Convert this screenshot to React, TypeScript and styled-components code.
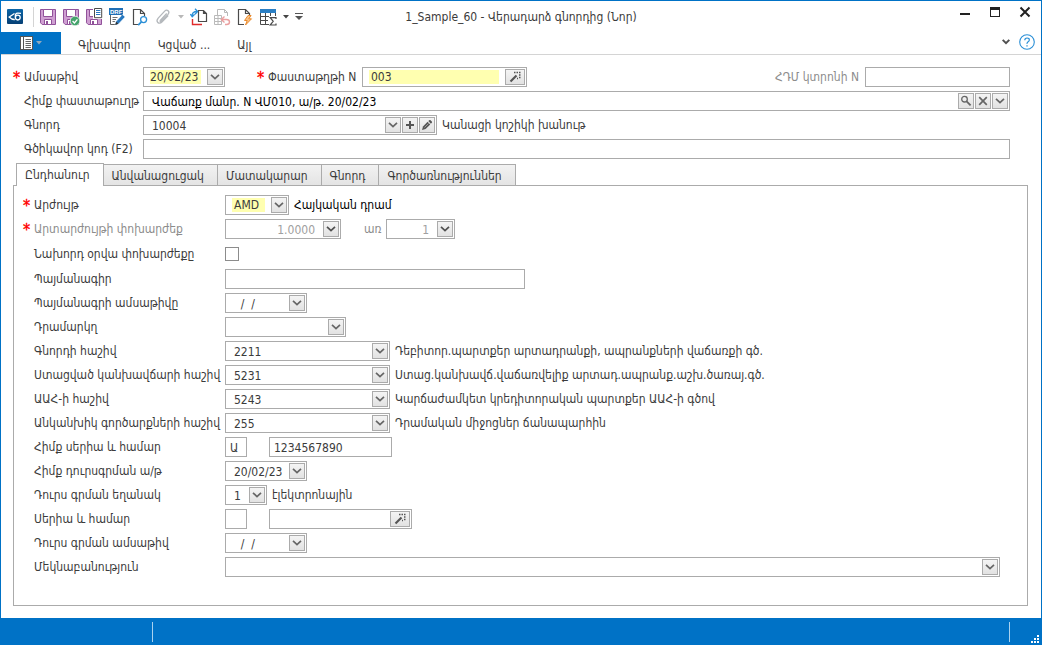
import React from "react";
import styled, { createGlobalStyle, css } from "styled-components";

const BLUE = "#0072c6";
const LINE = "#ababab";
const INK = "#3b3b3b";
const MUTED = "#8c8c8c";
const YELLOW = "#ffffb0";

const GlobalStyle = createGlobalStyle`
  *, *::before, *::after { box-sizing: border-box; }
  body { margin: 0; background: #fff; }
  body, button, input, select {
    font-family: "DejaVu Sans Condensed", "DejaVu Sans", sans-serif;
    font-size: 12px;
    color: ${INK};
  }
  button, input, select { margin: 0; padding: 0; border: 0; background: none; border-radius: 0; outline: 0; }
  svg { display: block; flex: none; }
`;

const Window = styled.div`
  display: flex;
  flex-direction: column;
  min-height: 100vh;
  border: 1px solid ${BLUE};
  border-bottom: 0;
`;

const TitleBar = styled.header`
  display: grid;
  grid-template-columns: 1fr auto 1fr;
  align-items: center;
  height: 31px;
  padding: 0 5px;
`;

const Title = styled.h1`
  margin: 0;
  font-size: 12px;
  font-weight: 400;
  line-height: 18px;
  white-space: nowrap;
`;

const Tools = styled.div`
  display: flex;
  align-items: center;
  gap: 5px;
  min-width: 0;
`;

const ToolButton = styled.button<{ $narrow?: boolean }>`
  display: flex;
  align-items: center;
  justify-content: center;
  flex: none;
  width: ${(p) => (p.$narrow ? 8 : 18)}px;
  height: 18px;
`;

const ToolDivider = styled.span`
  width: 1px;
  height: 20px;
  margin: 0 0 0 4px;
  background: #d4d4d4;
`;

const WindowButtons = styled.div`
  display: flex;
  justify-content: flex-end;
  align-self: start;
  gap: 18px;
  padding: 5px 5px 0 0;
`;

const WindowButton = styled.button`
  width: 12px;
  height: 12px;
`;

const Ribbon = styled.nav`
  display: flex;
  height: 23px;
  padding-right: 5px;
  border-bottom: 1px solid #d4d4d4;
`;

const FileButton = styled.button`
  display: flex;
  align-items: center;
  justify-content: center;
  gap: 3px;
  width: 60px;
  height: 22px;
  margin-right: 4px;
  background: ${BLUE};
`;

const RibbonTab = styled.button`
  height: 24px;
  padding: 2px 14px 0 13px;
  white-space: nowrap;
`;

const RibbonEnd = styled.div`
  display: flex;
  align-items: center;
  gap: 8px;
  height: 19px;
  margin-left: auto;
`;

const Content = styled.main`
  display: flex;
  flex-direction: column;
  flex: 1;
  padding: 12px 13px 12px 12px;
`;

const Stack = styled.div`
  display: flex;
  flex-direction: column;
  gap: 4px;
`;

const HeaderFields = styled(Stack)`
  padding-right: 18px;
  margin-bottom: 4px;
`;

const Row = styled.div<{ $tall?: boolean }>`
  display: flex;
  align-items: center;
  height: ${(p) => (p.$tall ? 22 : 20)}px;
`;

const Caption = styled.label<{ $width?: number; $muted?: boolean; $gap?: number; $inset?: number }>`
  display: flex;
  flex: none;
  width: ${(p) => (p.$width ? `${p.$width}px` : "auto")};
  margin-left: ${(p) => p.$gap ?? 0}px;
  padding-left: ${(p) => p.$inset ?? 0}px;
  line-height: 20px;
  height: 20px;
  white-space: nowrap;
  color: ${(p) => (p.$muted ? MUTED : INK)};
`;

const Star = styled.span`
  flex: none;
  width: 11px;
  font-size: 16px;
  line-height: 22px;
  color: #f00;
  -webkit-text-stroke: 0.4px #f00;
`;

const Note = styled.output<{ $strong?: boolean }>`
  padding-left: 5px;
  line-height: 20px;
  white-space: nowrap;
  color: ${(p) => (p.$strong ? "#000" : INK)};
`;

const Spacer = styled.span`
  flex: 1;
`;

const Gap = styled.span<{ $wide?: boolean }>`
  flex: none;
  width: ${(p) => (p.$wide ? 22 : 6)}px;
`;

const Box = styled.div<{ $width?: number }>`
  display: flex;
  align-items: center;
  gap: 1px;
  flex: ${(p) => (p.$width ? "none" : "1")};
  width: ${(p) => (p.$width ? `${p.$width}px` : "auto")};
  min-width: 0;
  height: 20px;
  padding: 1px;
  border: 1px solid ${LINE};
  background: #fff;
`;

const required = css`
  background-color: ${YELLOW};
  background-clip: content-box;
  padding: 1px 5px;
  text-indent: 2px;
`;

const Entry = styled.input<{
  $required?: boolean;
  $near?: boolean;
  $strong?: boolean;
  $right?: boolean;
  $date?: boolean;
}>`
  flex: 1;
  min-width: 0;
  width: 100%;
  height: 16px;
  padding: 1px ${(p) => (p.$date ? 2 : 7)}px 0 ${(p) => (p.$near ? 3 : 7)}px;
  text-align: ${(p) => (p.$right ? "right" : "left")};
  ${(p) => p.$strong && "color: #000;"}
  ${(p) => p.$required && required}
  ${(p) => p.$required && p.$date && "text-indent: 0;"}
  &:disabled { color: #a0a0a0; }
`;

const ComboBox = styled(Box)`
  display: grid;
  grid-template-columns: 1fr 16px;
  gap: 0;
`;

const Choice = styled.select<{ $required?: boolean }>`
  grid-area: 1 / 1 / 2 / 3;
  appearance: none;
  min-width: 0;
  height: 16px;
  padding: 1px 17px 0 7px;
  ${(p) => p.$required && required}
  ${(p) => p.$required && "padding-right: 22px;"}
`;

const bevel = css`
  display: flex;
  align-items: center;
  justify-content: center;
  flex: none;
  height: 16px;
  border: 1px solid ${LINE};
  background: linear-gradient(#f4f4f4, #e2e2e2);
`;

const MiniButton = styled.button<{ $wide?: boolean }>`
  ${bevel}
  width: ${(p) => (p.$wide ? 20 : 16)}px;
`;

const ComboArrow = styled.span`
  ${bevel}
  grid-area: 1 / 2;
  pointer-events: none;
`;

const Tick = styled.input`
  appearance: none;
  width: 14px;
  height: 14px;
  margin: 0;
  border: 1px solid #8c8c8c;
  background: #fff;
`;

const TabList = styled.div`
  display: flex;
  align-items: flex-end;
  height: 22px;
  padding-left: 3px;
`;

const Tab = styled.button<{ $active?: boolean }>`
  height: 21px;
  padding: 1px 13px 0 8px;
  border: 1px solid ${LINE};
  border-left-width: 0;
  border-bottom: 0;
  background: linear-gradient(#f2f2f2, #e4e4e4);
  white-space: nowrap;
  ${(p) =>
    p.$active &&
    css`
      height: 23px;
      margin-bottom: -1px;
      padding-bottom: 1px;
      border-left-width: 1px;
      background: #fff;
      z-index: 1;
    `}
`;

const Panel = styled(Stack)`
  flex: 1;
  padding: 9px 27px 28px 9px;
  border: 1px solid ${LINE};
`;

const StatusBar = styled.footer`
  display: flex;
  align-items: center;
  height: 27px;
  padding: 0 2px 0 0;
  background: ${BLUE};
`;

const StatusCell = styled.div<{ $width?: number }>`
  flex: ${(p) => (p.$width ? "none" : "1")};
  width: ${(p) => (p.$width ? `${p.$width}px` : "auto")};
  height: 20px;
  border-right: 1px solid #a9d2ef;
`;

const Grip = styled.span`
  display: flex;
  align-self: flex-end;
  justify-content: flex-end;
  width: 29px;
  padding-bottom: 2px;
`;

/* ---------- small glyphs inside fields ---------- */

const Chevron = ({ color = "#666" }: { color?: string }) => (
  <svg width="10" height="6" viewBox="0 0 10 6" fill="none" stroke={color} strokeWidth="1.7">
    <path d="M1 .8 5 4.6 9 .8" />
  </svg>
);

const CollapseChevron = () => (
  <svg width="8" height="6" viewBox="0 0 8 6" fill="none" stroke="#505050" strokeWidth="2">
    <path d="M.7 .9 4 4.200 7.300 .9" />
  </svg>
);

const Caret = ({ color }: { color: string }) => (
  <svg width="6" height="4" viewBox="0 0 6 4">
    <path d="M0 0h6L3 3.5z" fill={color} />
  </svg>
);

const Plus = () => (
  <svg width="10" height="10" viewBox="0 0 10 10">
    <path d="M5 1v8M1 5h8" stroke="#555" strokeWidth="2" />
  </svg>
);

const Pencil = () => (
  <svg width="12" height="12" viewBox="0 0 12 12">
    <path d="M1 11 2 7.4 6.6 2.8 9.2 5.4 4.6 10z" fill="#555" />
    <path d="M7.3 2.1 8.2 1.2q.7-.6 1.4 0l1.2 1.2q.6.7 0 1.4l-.9.9z" fill="#555" />
    <path d="M3.500 8.500 7.500 4.500" stroke="#bbb" strokeWidth=".7" />
  </svg>
);

const Wand = () => (
  <svg width="12" height="12" viewBox="0 0 12 12">
    <path d="M1.5 10.5 7.5 4.5" stroke="#555" strokeWidth="2.2" />
    <path d="M5 1.500h1.500M7.500 1.500h1.500M10 1.500h1.500M10 4h1.500M10 6.500h1.500M8 7.500h1" stroke="#555" strokeWidth="1.4" />
  </svg>
);

const Lens = () => (
  <svg width="12" height="12" viewBox="0 0 12 12" fill="none" stroke="#666">
    <circle cx="4.5" cy="4.2" r="2.8" strokeWidth="1.3" />
    <path d="M6.6 6.4 10.6 10.4" strokeWidth="1.9" />
  </svg>
);

const Cross = () => (
  <svg width="10" height="10" viewBox="0 0 10 10">
    <path d="M1.2 1.2 8.8 8.8M8.8 1.2 1.2 8.8" stroke="#666" strokeWidth="1.7" />
  </svg>
);

/* ---------- toolbar icons ---------- */

const Icon = ({ children }: { children: React.ReactNode }) => (
  <svg width="18" height="18" viewBox="0 0 18 18" fill="none">
    {children}
  </svg>
);

const LogoIcon = () => (
  <Icon>
    <defs>
      <linearGradient id="logo-fill" x1="0" y1="0" x2="0" y2="1">
        <stop offset="0" stopColor="#0b66a8" />
        <stop offset="1" stopColor="#063f74" />
      </linearGradient>
    </defs>
    <rect x="1" y="1" width="16" height="15" rx="1" fill="url(#logo-fill)" />
    <path d="M8.5 5.5 3.2 9q2.8 2.8 5.6 2.5" stroke="#fff" strokeWidth="1.4" />
    <circle cx="11.8" cy="9.6" r="2.4" stroke="#fff" strokeWidth="1.3" />
    <path d="M9.4 9.4Q8.8 5 12 5.2l3 .2" stroke="#fff" strokeWidth="1.3" />
  </Icon>
);

const Floppy = () => (
  <>
    <path d="M1.5 1.5h15v15H3.2L1.5 14.8z" fill="#cf9fd2" stroke="#91529a" />
    <path d="M4.5 1.500h9v7h-9z" fill="#fff" stroke="#91529a" />
    <path d="M5.5 11.5h7v5h-7z" fill="#fff" stroke="#91529a" />
    <path d="M7 13h2v3.5H7z" fill="#91529a" />
  </>
);

const SaveIcon = () => (
  <Icon>
    <Floppy />
  </Icon>
);

const SaveCheckIcon = () => (
  <Icon>
    <Floppy />
    <circle cx="13" cy="13" r="4.8" fill="#45a36c" stroke="#fff" strokeWidth=".7" />
    <path d="m10.6 13 1.8 1.9 3-3.6" stroke="#fff" strokeWidth="1.3" />
  </Icon>
);

const SaveDocIcon = () => (
  <Icon>
    <Floppy />
    <path d="M8 0h10v11H8z" fill="#fff" />
    <path d="M9.5.5h7.2v9.2H9.5z" fill="#fff" stroke="#4a4a4a" />
    <path d="M11 2.500h4.4M11 4.500h4.400M11 6.500h4.400" stroke="#2878c0" />
  </Icon>
);

const DraftIcon = () => (
  <Icon>
    <path d="M2.500 6v10.500H9M13.500 7v2" stroke="#606060" />
    <path d="M4.500 9.500h5M4.500 11.500h3.500M4.500 13.500h2.400" stroke="#707070" />
    <rect x="1" y="0" width="14" height="7" fill="#1f6fb5" />
    <text x="2" y="6" fontSize="6" fontWeight="700" fill="#fff" fontFamily="Liberation Sans, sans-serif">
      DRF
    </text>
    <path d="m8 13.500 6.500-7 2.600 2.400-6.600 7-3.500 1.200z" fill="#2878c0" stroke="#fff" strokeWidth=".5" />
    <path d="m7.2 16.9 1-3.2 2.2 2z" fill="#333" />
  </Icon>
);

const Sheet = ({ color = "#4a4a4a" }: { color?: string }) => (
  <path d="M8 16.5H2.5v-15h7l4 4V8M9.5 1.5v4h4" stroke={color} strokeWidth="1.2" />
);

const PreviewIcon = () => (
  <Icon>
    <Sheet />
    <circle cx="12.6" cy="11.6" r="3" stroke="#2b8fd6" strokeWidth="1.3" />
    <path d="m10.4 13.8-3.2 3.4" stroke="#2b8fd6" strokeWidth="1.7" />
  </Icon>
);

const ClipIcon = () => (
  <Icon>
    <path
      d="m12.700 5.500-6.200 6.700c-.9 1.100-.1 2 .9 1.100l6.600-6.900c2.300-2.700-.9-5.700-3.300-3.300l-6.500 7c-2.900 3.400.6 7 3.700 3.900l6.300-6.500"
      stroke="#b4b8bc"
      strokeWidth="1.300"
    />
  </Icon>
);

const RefreshDocsIcon = () => (
  <Icon>
    <path d="M8.500 13.500v-11h5l3 3v8zM13.500 2.500v3h3" fill="#fff" stroke="#4a4a4a" strokeWidth="1.200" />
    <path d="M2.500 11v5.500h9.500" stroke="#e02b2b" strokeWidth="1.400" />
    <path d="M2.200 8.500q-.6-5 5-5M5 .8l2.600 2.700L5 6.200M.3 6l1.900 2.700L4.600 6.200" stroke="#2b8fd6" strokeWidth="1.300" />
  </Icon>
);

const UndoDocIcon = () => (
  <Icon>
    <path
      d="M4.500 7V1.500h7l3 3V8M11.500 1.500v3h3M1.500 7.500h7v3h-7zM1.500 10.500h7v3h-7zM1.500 13.500h7v3h-7zM5 7.500v9"
      stroke="#b9b9b9"
    />
    <path d="M8.500 11.500h5q3 0 3 2.500t-3 2.500H12M11.500 8.500l-3.200 3 3.200 3" stroke="#eaa0a0" strokeWidth="1.400" />
  </Icon>
);

const RunDocIcon = () => (
  <Icon>
    <Sheet />
    <path d="m12 7.500-3.500 5h2.700l-1.700 4.500 6-6.200h-2.800l2.400-3.300z" fill="#f9c48b" stroke="#ea8a2c" />
  </Icon>
);

const TotalsIcon = () => (
  <Icon>
    <path d="M1 1h16v4H1z" fill="#2b7fc4" />
    <path d="M1.500 5v11.500H10M6.500 5v11.500M11.500 5v3M16.500 5v3M1.500 8.500h8.500M1.500 12.500H9" stroke="#4a4a4a" />
    <path d="M17 11V9.600h-5.800l3 3.700-3 3.700H17v-1.400" stroke="#4a4a4a" strokeWidth="1.200" />
  </Icon>
);

const OverflowIcon = () => (
  <svg width="8" height="7" viewBox="0 0 8 7">
    <path d="M0 0h8v1H0zM0 3h8L4 7z" fill="#555" />
  </svg>
);

const DocListIcon = () => (
  <svg width="13" height="14" viewBox="0 0 13 14" fill="none">
    <rect x=".5" y=".5" width="12" height="13" fill="#fff" stroke="#555" />
    <path d="M3.500 1v12" stroke="#555" />
    <path d="M5.500 3.500H11M5.500 5.500H11M5.500 7.500H11M5.500 9.500H11M5.500 11.500H11" stroke="#666" />
  </svg>
);

const HelpIcon = () => (
  <svg width="16" height="16" viewBox="0 0 16 16" fill="none" stroke="#2b8fd6">
    <circle cx="8" cy="8" r="7.300" strokeWidth="1.100" />
    <path d="M5.800 6.200q0-2.200 2.300-2.200t2.200 2q0 1-1.200 1.800T8 9.900" strokeWidth="1.200" />
    <path d="M8 11.200v1.400" strokeWidth="1.300" />
  </svg>
);

const ResizeGrip = () => (
  <svg width="8" height="8" viewBox="0 0 8 8" fill="#fff">
    <path d="M6 0h2v2H6zM3 3h2v2H3zM6 3h2v2H6zM0 6h2v2H0zM3 6h2v2H3zM6 6h2v2H6z" />
  </svg>
);

/* ---------- field helpers ---------- */

type ComboProps = { id: string; value: string; width?: number; required?: boolean };

const Combo = ({ id, value, width, required: isRequired }: ComboProps) => (
  <ComboBox $width={width}>
    <Choice id={id} $required={isRequired} defaultValue={value}>
      <option>{value}</option>
    </Choice>
    <ComboArrow>
      <Chevron />
    </ComboArrow>
  </ComboBox>
);

const DateField = ({ id, value, required: isRequired }: ComboProps) => (
  <Box $width={82}>
    <Entry id={id} $date $required={isRequired} defaultValue={value} />
    <MiniButton aria-label="Օրացույց">
      <Chevron />
    </MiniButton>
  </Box>
);

const RateField = ({ id, value, width }: ComboProps) => (
  <Box $width={width}>
    <Entry id={id} $right disabled defaultValue={value} />
    <MiniButton aria-label="Հաշվիչ">
      <Chevron color="#505050" />
    </MiniButton>
  </Box>
);

type LabelProps = { htmlFor: string; text: string; width: number; star?: boolean; muted?: boolean };

const FieldLabel = ({ htmlFor, text, width, star, muted }: LabelProps) => (
  <Caption htmlFor={htmlFor} $width={width} $muted={muted} $inset={star ? 0 : 11}>
    {star && <Star>*</Star>}
    {text}
  </Caption>
);

const HEAD = 130;
const BODY = 202;

const accounts = [
  { id: "acc-customer", label: "Գնորդի հաշիվ", value: "2211", note: "Դեբիտոր.պարտքեր արտադրանքի, ապրանքների վաճառքի գծ." },
  { id: "acc-advance", label: "Ստացված կանխավճարի հաշիվ", value: "5231", note: "Ստաց.կանխավճ.վաճառվելիք արտադ.ապրանք.աշխ.ծառայ.գծ." },
  { id: "acc-vat", label: "ԱԱՀ-ի հաշիվ", value: "5243", note: "Կարճաժամկետ կրեդիտորական պարտքեր ԱԱՀ-ի գծով" },
  { id: "acc-cashless", label: "Անկանխիկ գործարքների հաշիվ", value: "255", note: "Դրամական միջոցներ ճանապարհին" },
];

const tabs = ["Ընդհանուր", "Անվանացուցակ", "Մատակարար", "Գնորդ", "Գործառնություններ"];

export default function App() {
  return (
    <Window>
      <GlobalStyle />
      <TitleBar>
        <Tools>
          <LogoIcon />
          <ToolDivider />
          <ToolButton aria-label="Save"><SaveIcon /></ToolButton>
          <ToolButton aria-label="Save and close"><SaveCheckIcon /></ToolButton>
          <ToolButton aria-label="Save and print"><SaveDocIcon /></ToolButton>
          <ToolButton aria-label="Save draft"><DraftIcon /></ToolButton>
          <ToolButton aria-label="Preview"><PreviewIcon /></ToolButton>
          <ToolButton aria-label="Attach"><ClipIcon /></ToolButton>
          <ToolButton $narrow aria-label="Attach options"><Caret color="#b8b8b8" /></ToolButton>
          <ToolButton aria-label="Refresh"><RefreshDocsIcon /></ToolButton>
          <ToolButton aria-label="Undo"><UndoDocIcon /></ToolButton>
          <ToolButton aria-label="Run"><RunDocIcon /></ToolButton>
          <ToolButton aria-label="Totals"><TotalsIcon /></ToolButton>
          <ToolButton $narrow aria-label="Totals options"><Caret color="#444" /></ToolButton>
          <ToolButton $narrow aria-label="Customize"><OverflowIcon /></ToolButton>
        </Tools>
        <Title>1_Sample_60 - Վերադարձ գնորդից (Նոր)</Title>
        <WindowButtons>
          <WindowButton aria-label="Minimize">
            <svg width="12" height="12" viewBox="0 0 12 12"><path d="M1 7h10v2H1z" fill="#222" /></svg>
          </WindowButton>
          <WindowButton aria-label="Maximize">
            <svg width="12" height="12" viewBox="0 0 12 12"><path d="M1 1h10v10H1zM2 4v6h8V4z" fillRule="evenodd" fill="#222" /></svg>
          </WindowButton>
          <WindowButton aria-label="Close">
            <svg width="12" height="12" viewBox="0 0 12 12"><path d="M1.500 1.500l9 9M10.500 1.500l-9 9" stroke="#222" strokeWidth="2" /></svg>
          </WindowButton>
        </WindowButtons>
      </TitleBar>

      <Ribbon>
        <FileButton aria-label="File">
          <DocListIcon />
          <Caret color="#8fa9bd" />
        </FileButton>
        <RibbonTab>Գլխավոր</RibbonTab>
        <RibbonTab>Կցված ...</RibbonTab>
        <RibbonTab>Այլ</RibbonTab>
        <RibbonEnd>
          <ToolButton $narrow aria-label="Collapse"><CollapseChevron /></ToolButton>
          <ToolButton aria-label="Help"><HelpIcon /></ToolButton>
        </RibbonEnd>
      </Ribbon>

      <Content>
        <HeaderFields>
          <Row>
            <FieldLabel htmlFor="date" text="Ամսաթիվ" width={HEAD} star />
            <DateField id="date" value="20/02/23" required />
            <Caption htmlFor="number" $width={105} $gap={32}>
              <Star>*</Star>Փաստաթղթի N
            </Caption>
            <Box $width={165}>
              <Entry id="number" $required defaultValue="003" />
              <MiniButton $wide aria-label="Գեներացնել"><Wand /></MiniButton>
            </Box>
            <Spacer />
            <Caption htmlFor="receipt" $muted>ՀԴՄ կտրոնի N</Caption>
            <Gap />
            <Box $width={145}><Entry id="receipt" /></Box>
          </Row>
          <Row>
            <FieldLabel htmlFor="basis" text="Հիմք փաստաթուղթ" width={HEAD} />
            <Box>
              <Entry id="basis" $strong defaultValue="Վաճառք մանր. N ՎՄ010, ա/թ. 20/02/23" />
              <MiniButton aria-label="Որոնել"><Lens /></MiniButton>
              <MiniButton aria-label="Մաքրել"><Cross /></MiniButton>
              <MiniButton aria-label="Ընտրել"><Chevron /></MiniButton>
            </Box>
          </Row>
          <Row>
            <FieldLabel htmlFor="customer" text="Գնորդ" width={HEAD} />
            <Box $width={294}>
              <Entry id="customer" defaultValue="10004" />
              <MiniButton aria-label="Ընտրել"><Chevron /></MiniButton>
              <MiniButton aria-label="Ավելացնել"><Plus /></MiniButton>
              <MiniButton aria-label="Խմբագրել"><Pencil /></MiniButton>
            </Box>
            <Note>Կանացի կոշիկի խանութ</Note>
          </Row>
          <Row>
            <FieldLabel htmlFor="barcode" text="Գծիկավոր կոդ (F2)" width={HEAD} />
            <Box><Entry id="barcode" /></Box>
          </Row>
        </HeaderFields>

        <TabList role="tablist">
          {tabs.map((name, i) => (
            <Tab key={name} role="tab" aria-selected={i === 0} $active={i === 0}>{name}</Tab>
          ))}
        </TabList>

        <Panel role="tabpanel">
          <Row>
            <FieldLabel htmlFor="currency" text="Արժույթ" width={BODY} star />
            <Combo id="currency" value="AMD" width={64} required />
            <Note $strong>Հայկական դրամ</Note>
          </Row>
          <Row>
            <FieldLabel htmlFor="rate" text="Արտարժույթի փոխարժեք" width={BODY} star muted />
            <RateField id="rate" value="1.0000" width={116} />
            <Caption htmlFor="per" $muted $width={45} $inset={23}>առ</Caption>
            <RateField id="per" value="1" width={69} />
          </Row>
          <Row $tall>
            <FieldLabel htmlFor="prev-rate" text="Նախորդ օրվա փոխարժեքը" width={BODY} />
            <Tick id="prev-rate" type="checkbox" />
          </Row>
          <Row>
            <FieldLabel htmlFor="contract" text="Պայմանագիր" width={BODY} />
            <Box $width={300}><Entry id="contract" /></Box>
          </Row>
          <Row>
            <FieldLabel htmlFor="contract-date" text="Պայմանագրի ամսաթիվը" width={BODY} />
            <DateField id="contract-date" value="  /  /" />
          </Row>
          <Row>
            <FieldLabel htmlFor="cash-desk" text="Դրամարկղ" width={BODY} />
            <Combo id="cash-desk" value="" width={121} />
          </Row>
          {accounts.map((a) => (
            <Row key={a.id}>
              <FieldLabel htmlFor={a.id} text={a.label} width={BODY} />
              <Combo id={a.id} value={a.value} width={165} />
              <Note>{a.note}</Note>
            </Row>
          ))}
          <Row>
            <FieldLabel htmlFor="basis-series" text="Հիմք սերիա և համար" width={BODY} />
            <Box $width={22}><Entry id="basis-series" $near defaultValue="Ա" /></Box>
            <Gap $wide />
            <Box $width={123}><Entry aria-label="Հիմք համար" $near defaultValue="1234567890" /></Box>
          </Row>
          <Row>
            <FieldLabel htmlFor="basis-date" text="Հիմք դուրսգրման ա/թ" width={BODY} />
            <DateField id="basis-date" value="20/02/23" />
          </Row>
          <Row>
            <FieldLabel htmlFor="method" text="Դուրս գրման եղանակ" width={BODY} />
            <Combo id="method" value="1" width={42} />
            <Note>էլեկտրոնային</Note>
          </Row>
          <Row>
            <FieldLabel htmlFor="series" text="Սերիա և համար" width={BODY} />
            <Box $width={22}><Entry id="series" $near /></Box>
            <Gap $wide />
            <Box $width={143}>
              <Entry aria-label="Համար" $near />
              <MiniButton $wide aria-label="Գեներացնել"><Wand /></MiniButton>
            </Box>
          </Row>
          <Row>
            <FieldLabel htmlFor="issue-date" text="Դուրս գրման ամսաթիվ" width={BODY} />
            <DateField id="issue-date" value="  /  /" />
          </Row>
          <Row>
            <FieldLabel htmlFor="comment" text="Մեկնաբանություն" width={BODY} />
            <Combo id="comment" value="" />
          </Row>
        </Panel>
      </Content>

      <StatusBar>
        <StatusCell $width={152} />
        <StatusCell />
        <Grip><ResizeGrip /></Grip>
      </StatusBar>
    </Window>
  );
}
